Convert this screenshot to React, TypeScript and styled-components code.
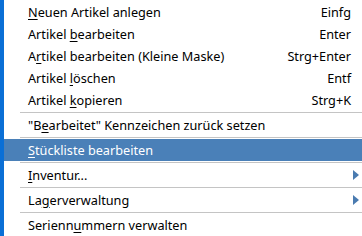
import React from 'react';
import styled, { createGlobalStyle } from 'styled-components';

const GlobalStyle = createGlobalStyle`
  html, body {
    margin: 0;
    padding: 0;
    background: #ffffff;
  }
  body {
    font-family: "Noto Sans", "Open Sans", sans-serif;
    font-size: 12.7px;
    color: #000000;
  }
`;

const Page = styled.div`
  display: flex;
  width: 362px;
  height: 236px;
  overflow: hidden;
`;

const Edge = styled.div`
  width: 4px;
  flex: none;
  background: #0a6fd6;
`;

const Menu = styled.div`
  flex: 1;
  display: flex;
  flex-direction: column;
  padding-top: 1px;
  background: #ffffff;
`;

const Row = styled.div<{ $active?: boolean }>`
  height: 22px;
  display: flex;
  align-items: center;
  padding: 0 11px 0 24px;
  background: ${(p) => (p.$active ? '#4a80b8' : 'transparent')};
  color: ${(p) => (p.$active ? '#ffffff' : '#000000')};
  white-space: nowrap;
`;

const Label = styled.span`
  flex: 1;
`;

const Key = styled.span`
  text-align: right;
`;

const Mn = styled.span`
  text-decoration: underline;
  text-underline-offset: 2px;
`;

const Separator = styled.div`
  height: 1px;
  margin: 1px 0 1px 16px;
  background: #c4c4c4;
`;

const Arrow = styled.span`
  width: 0;
  height: 0;
  margin-right: -8px;
  border-top: 5px solid transparent;
  border-bottom: 5px solid transparent;
  border-left: 6px solid #4a7bb0;
`;

type Item = {
  pre: string;
  mn: string;
  post: string;
  key?: string;
  sub?: boolean;
  active?: boolean;
  sepBefore?: boolean;
};

const items: Item[] = [
  { pre: '', mn: 'N', post: 'euen Artikel anlegen', key: 'Einfg' },
  { pre: 'Artikel ', mn: 'b', post: 'earbeiten', key: 'Enter' },
  { pre: 'A', mn: 'r', post: 'tikel bearbeiten (Kleine Maske)', key: 'Strg+Enter' },
  { pre: 'Artikel ', mn: 'l', post: 'öschen', key: 'Entf' },
  { pre: 'Artikel ', mn: 'k', post: 'opieren', key: 'Strg+K' },
  { pre: '"B', mn: 'e', post: 'arbeitet" Kennzeichen zurück setzen', sepBefore: true },
  { pre: '', mn: 'S', post: 'tückliste bearbeiten', active: true, sepBefore: true },
  { pre: '', mn: 'I', post: 'nventur...', sub: true, sepBefore: true },
  { pre: 'La', mn: 'g', post: 'erverwaltung', sub: true, sepBefore: true },
  { pre: 'Serienn', mn: 'u', post: 'mmern verwalten', sepBefore: true },
];

export default function App() {
  return (
    <>
      <GlobalStyle />
      <Page>
        <Edge />
        <Menu>
          {items.map((it, i) => (
            <React.Fragment key={i}>
              {it.sepBefore && <Separator />}
              <Row $active={it.active}>
                <Label>
                  {it.pre}
                  <Mn>{it.mn}</Mn>
                  {it.post}
                </Label>
                {it.key && <Key>{it.key}</Key>}
                {it.sub && <Arrow />}
              </Row>
            </React.Fragment>
          ))}
        </Menu>
      </Page>
    </>
  );
}
